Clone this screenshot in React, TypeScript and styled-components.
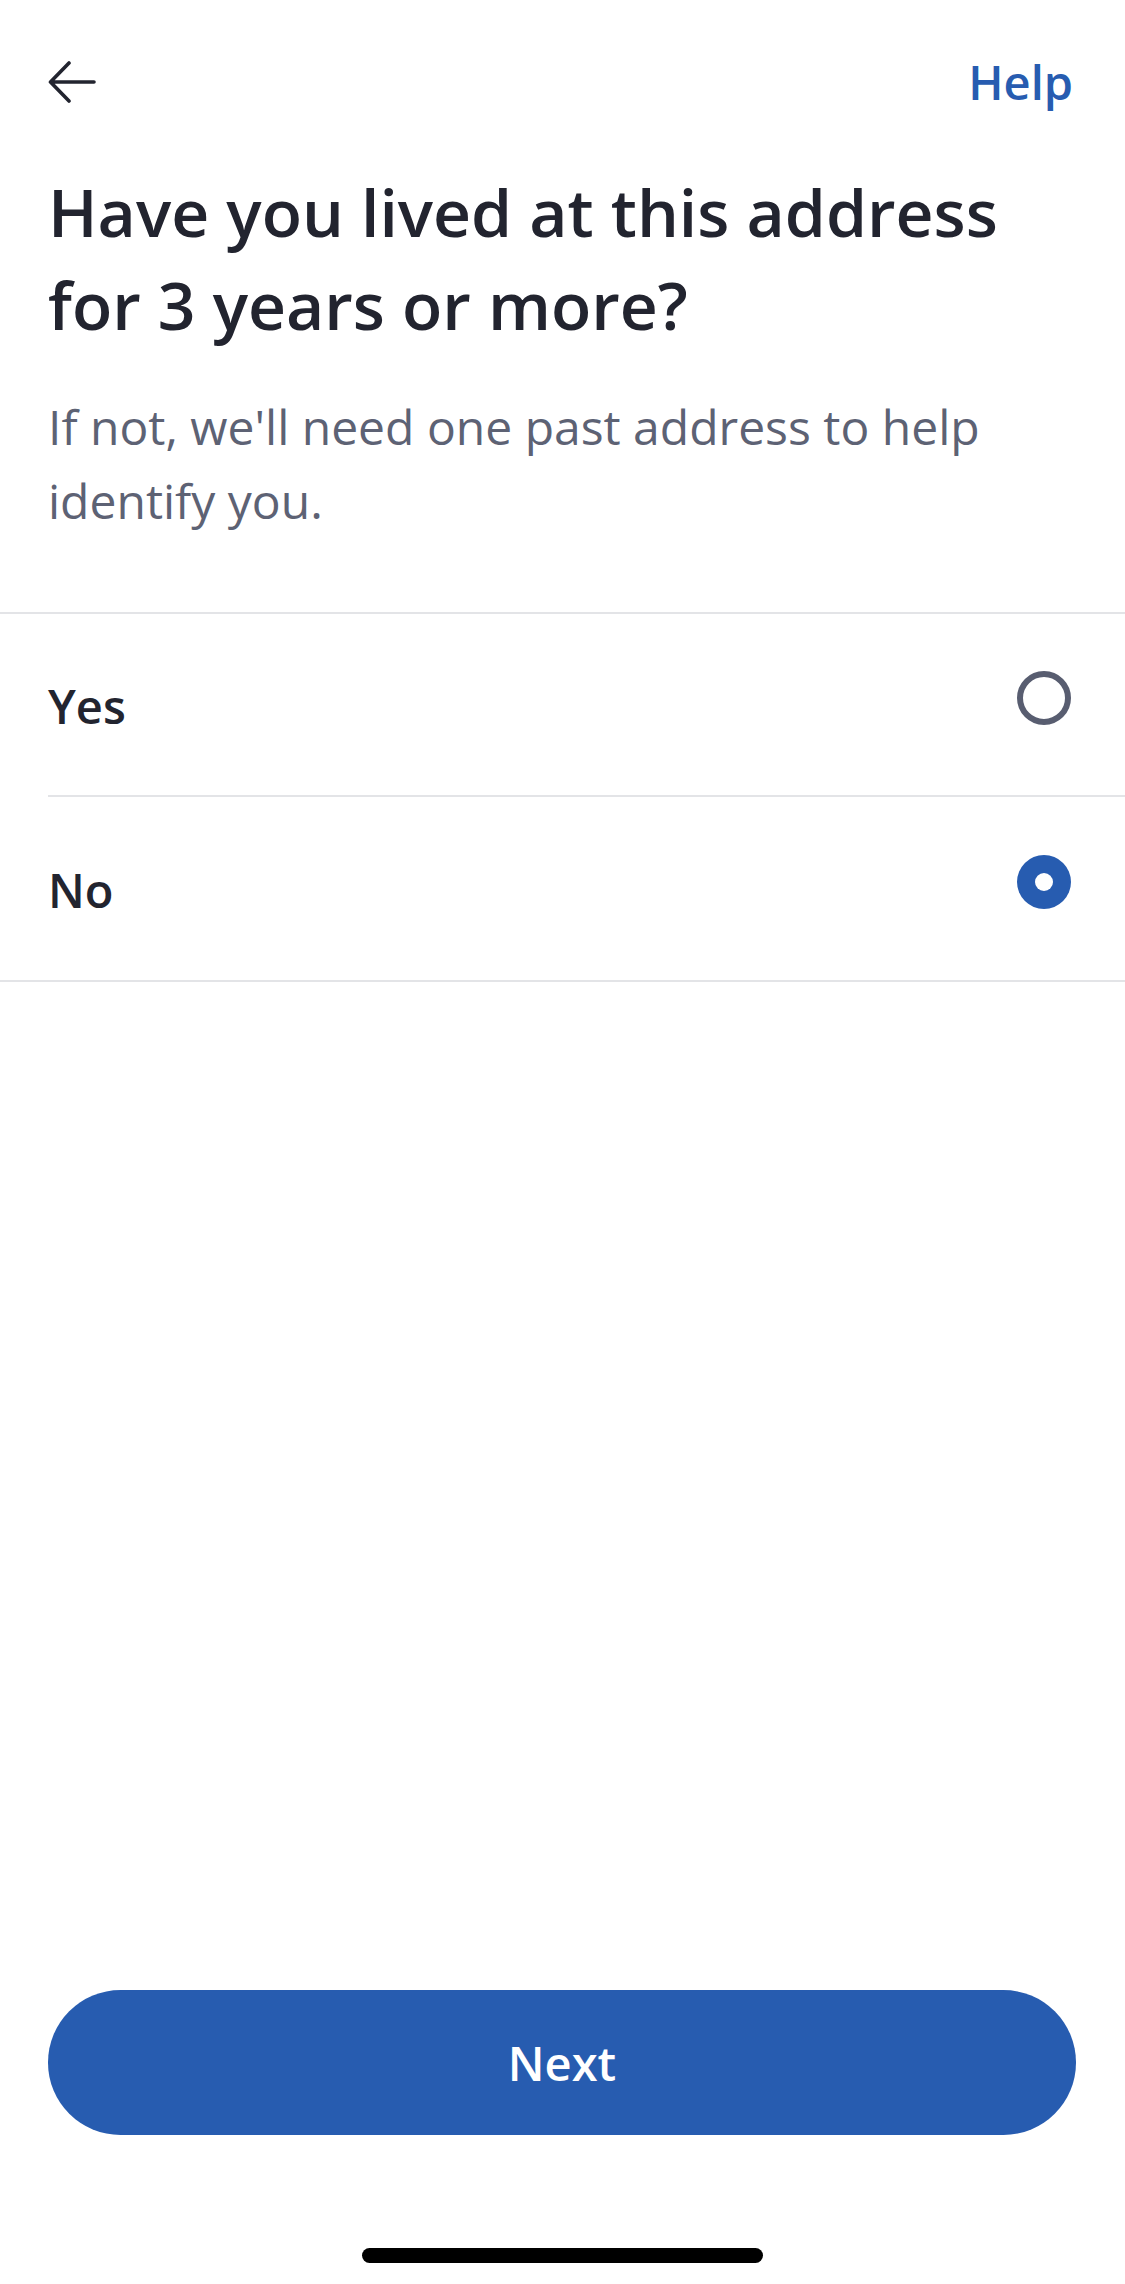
import React, { useState } from "react";
import styled, { createGlobalStyle } from "styled-components";

const GlobalStyle = createGlobalStyle`
  html, body {
    margin: 0;
    padding: 0;
    background: #ffffff;
  }
  * {
    box-sizing: border-box;
  }
`;

const Screen = styled.div`
  display: flex;
  flex-direction: column;
  width: 100%;
  height: 100vh;
  background: #ffffff;
  font-family: "Open Sans", "Noto Sans", sans-serif;
  color: #22242f;
`;

const Header = styled.div`
  display: flex;
  align-items: center;
  justify-content: space-between;
  height: 165px;
  padding: 0 52px 0 48px;
  padding-bottom: 1px;
`;

const BackButton = styled.button`
  display: flex;
  align-items: center;
  justify-content: center;
  padding: 0;
  border: none;
  background: none;
  cursor: pointer;
  color: #22242f;
`;

const HelpLink = styled.a`
  font-size: 47px;
  font-weight: 600;
  color: #275cb0;
  text-decoration: none;
  cursor: pointer;
`;

const Intro = styled.div`
  padding: 0 48px;
`;

const Title = styled.h1`
  margin: 0;
  font-size: 66px;
  line-height: 93px;
  font-weight: 600;
  color: #22242f;
  letter-spacing: 0;
`;

const Subtitle = styled.p`
  margin: 39px 0 0;
  font-size: 48px;
  line-height: 74px;
  font-weight: 400;
  color: #5d6274;
`;

const OptionList = styled.div`
  margin-top: 74px;
  border-top: 2px solid #e3e4e7;
  border-bottom: 2px solid #e3e4e7;
`;

const OptionRow = styled.label<{ $last?: boolean }>`
  display: flex;
  align-items: center;
  justify-content: space-between;
  height: 183px;
  margin-left: 48px;
  padding-right: 54px;
  border-bottom: ${(p) => (p.$last ? "none" : "2px solid #e3e4e7")};
  cursor: pointer;
`;

const OptionLabel = styled.span`
  font-size: 47px;
  font-weight: 600;
  color: #22242f;
  padding-top: 2px;
`;

const Radio = styled.span<{ $checked: boolean }>`
  display: flex;
  align-items: center;
  justify-content: center;
  width: 54px;
  height: 54px;
  margin-bottom: 13px;
  border-radius: 50%;
  border: ${(p) => (p.$checked ? "none" : "6px solid #585d70")};
  background: ${(p) => (p.$checked ? "#275cb0" : "#ffffff")};
  &::after {
    content: "";
    display: ${(p) => (p.$checked ? "block" : "none")};
    width: 18px;
    height: 18px;
    border-radius: 50%;
    background: #ffffff;
  }
`;

const Spacer = styled.div`
  flex: 1;
`;

const Footer = styled.div`
  display: flex;
  flex-direction: column;
  align-items: center;
  padding: 0 49px 21px 48px;
`;

const NextButton = styled.button`
  width: 100%;
  height: 145px;
  border: none;
  border-radius: 73px;
  background: #275cb0;
  color: #ffffff;
  font-family: "Open Sans", "Noto Sans", sans-serif;
  font-size: 47px;
  font-weight: 600;
  cursor: pointer;
`;

const HomeIndicator = styled.div`
  width: 401px;
  height: 15px;
  margin-top: 113px;
  border-radius: 8px;
  background: #000000;
`;

const options = ["Yes", "No"];

export default function App() {
  const [selected, setSelected] = useState("No");

  return (
    <>
      <GlobalStyle />
      <Screen>
        <Header>
          <BackButton aria-label="Back">
            <svg width="48" height="42" viewBox="0 0 48 42" fill="none">
              <path
                d="M46 21H3M21 2L2.5 21L21 40"
                stroke="currentColor"
                strokeWidth="3.6"
                strokeLinecap="round"
                strokeLinejoin="round"
              />
            </svg>
          </BackButton>
          <HelpLink>Help</HelpLink>
        </Header>
        <Intro>
          <Title>
            Have you lived at this address
            <br />
            for 3 years or more?
          </Title>
          <Subtitle>
            If not, we'll need one past address to help identify you.
          </Subtitle>
        </Intro>
        <OptionList>
          {options.map((opt, i) => (
            <OptionRow
              key={opt}
              $last={i === options.length - 1}
              onClick={() => setSelected(opt)}
            >
              <OptionLabel>{opt}</OptionLabel>
              <Radio $checked={selected === opt} />
            </OptionRow>
          ))}
        </OptionList>
        <Spacer />
        <Footer>
          <NextButton>Next</NextButton>
          <HomeIndicator />
        </Footer>
      </Screen>
    </>
  );
}
